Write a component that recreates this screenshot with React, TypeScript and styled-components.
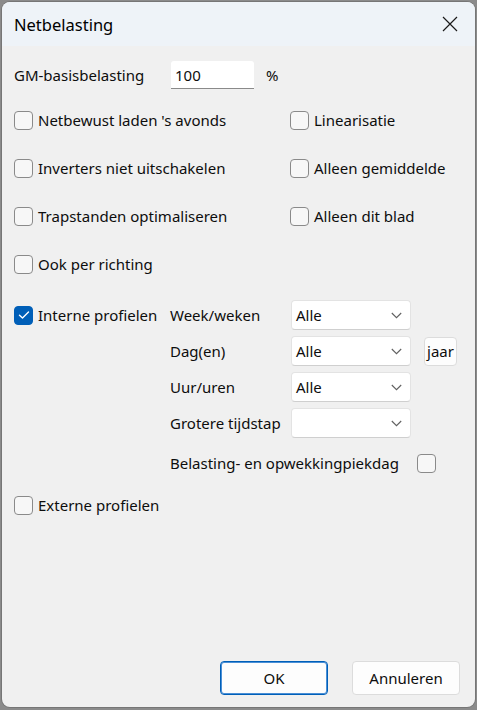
import React, { useState } from 'react'
import styled, { createGlobalStyle } from 'styled-components'

const GlobalStyle = createGlobalStyle`
  html, body { margin: 0; padding: 0; }
  body {
    background: #8b8b8b;
    font-family: "Segoe UI", "Noto Sans", "Open Sans", sans-serif;
    font-size: 15px;
    color: #0d0d0d;
  }
  * { box-sizing: border-box; }
`

const Page = styled.div`
  width: 477px;
  height: 710px;
  padding: 2px 2px 3px 2px;
`

const Dialog = styled.div`
  height: 100%;
  display: flex;
  flex-direction: column;
  background: #f0f0f0;
  border-radius: 8px;
  overflow: hidden;
  box-shadow: 0 0 0 1px rgba(0, 0, 0, 0.15);
`

const TitleBar = styled.header`
  height: 44px;
  flex: none;
  display: flex;
  align-items: center;
  justify-content: space-between;
  padding: 0 16px 0 12px;
  background: #eef3f8;
  font-size: 16.5px;
  color: #000;
`

const CloseButton = styled.button`
  border: 0;
  background: none;
  padding: 0;
  width: 18px;
  height: 18px;
  display: flex;
  align-items: center;
  justify-content: center;
`

const Body = styled.div`
  flex: 1;
  display: flex;
  flex-direction: column;
  padding: 15px 15px 12px 10px;
`

const FieldRow = styled.div`
  display: flex;
  align-items: center;
  height: 28px;
  padding-left: 2px;
`

const FieldLabel = styled.span`
  width: 157px;
`

const TextInput = styled.input`
  width: 83px;
  height: 28px;
  border: 0;
  border-bottom: 1px solid #8a8a8a;
  border-radius: 3px 3px 0 0;
  background: #fff;
  font: inherit;
  padding: 0 4px;
  color: #0d0d0d;
  outline: none;
`

const Unit = styled.span`
  margin-left: 12px;
`

const OptionGrid = styled.div`
  display: grid;
  grid-template-columns: 276px 1fr;
  grid-auto-rows: 48px;
  margin-top: 7px;
  padding-left: 2px;
`

const CheckLabel = styled.label`
  display: flex;
  align-items: center;
  gap: 5px;
  cursor: default;
  white-space: nowrap;
`

const Box = styled.span<{ $checked?: boolean }>`
  width: 19px;
  height: 19px;
  flex: none;
  border-radius: 4px;
  border: 1px solid ${p => (p.$checked ? '#005fb8' : '#8a8a8a')};
  background: ${p => (p.$checked ? '#005fb8' : '#f7f7f7')};
  display: flex;
  align-items: center;
  justify-content: center;
`

const ProfileSection = styled.div`
  display: grid;
  grid-template-columns: 156px 121px 120px 47px;
  row-gap: 6px;
  grid-auto-rows: 30px;
  margin-top: 12px;
  padding-left: 2px;
  align-items: center;
`

const ProfileLabel = styled.span`
  white-space: nowrap;
`

const Combo = styled.div`
  height: 30px;
  display: flex;
  align-items: center;
  justify-content: space-between;
  padding: 0 8px 0 4px;
  background: #fff;
  border: 1px solid #e3e3e3;
  border-bottom-color: #cfcfcf;
  border-radius: 4px;
`

const SmallButton = styled.button`
  margin-left: 13px;
  height: 29px;
  width: 33px;
  padding: 0;
  border: 1px solid #dcdcdc;
  border-radius: 4px;
  background: #fdfdfd;
  font: inherit;
  color: #0d0d0d;
`

const PeakRow = styled.div`
  display: flex;
  align-items: center;
  height: 26px;
  margin-top: 12px;
  padding-left: 158px;
`

const PeakLabel = styled.span`
  width: 247px;
  white-space: nowrap;
`

const ExternalRow = styled.div`
  margin-top: 17px;
  padding-left: 2px;
  height: 24px;
  display: flex;
  align-items: center;
`

const Footer = styled.div`
  margin-top: auto;
  display: flex;
  justify-content: flex-end;
  gap: 24px;
`

const DialogButton = styled.button<{ $primary?: boolean }>`
  width: 108px;
  height: 34px;
  border-radius: 4px;
  font: inherit;
  color: #0d0d0d;
  background: #fdfdfd;
  border: 1px solid ${p => (p.$primary ? '#005fb8' : '#dcdcdc')};
  box-shadow: ${p => (p.$primary ? 'inset 0 0 0 1px #4a8fd6' : 'none')};
`

const Check = ({ checked, onToggle, children }: { checked: boolean; onToggle: () => void; children?: React.ReactNode }) => (
  <CheckLabel onClick={onToggle}>
    <Box $checked={checked}>
      {checked && (
        <svg width="12" height="10" viewBox="0 0 12 10">
          <path d="M1.5 5.2 L4.5 8 L10.5 2" fill="none" stroke="#fff" strokeWidth="1.4" strokeLinecap="round" strokeLinejoin="round" />
        </svg>
      )}
    </Box>
    {children}
  </CheckLabel>
)

const Chevron = () => (
  <svg width="11" height="7" viewBox="0 0 11 7">
    <path d="M0.8 1 L5.5 5.7 L10.2 1" fill="none" stroke="#606060" strokeWidth="1.1" />
  </svg>
)

const Select = ({ value }: { value: string }) => (
  <Combo>
    <span>{value}</span>
    <Chevron />
  </Combo>
)

const App: React.FC = () => {
  const [flags, setFlags] = useState<Record<string, boolean>>({ interne: true })
  const toggle = (key: string) => () => setFlags({ ...flags, [key]: !flags[key] })

  const options: [string, string][] = [
    ['netbewust', "Netbewust laden 's avonds"],
    ['linear', 'Linearisatie'],
    ['inverters', 'Inverters niet uitschakelen'],
    ['gemiddelde', 'Alleen gemiddelde'],
    ['trap', 'Trapstanden optimaliseren'],
    ['blad', 'Alleen dit blad'],
    ['richting', 'Ook per richting'],
  ]

  return (
    <Page>
      <GlobalStyle />
      <Dialog>
        <TitleBar>
          <span>Netbelasting</span>
          <CloseButton>
            <svg width="16" height="16" viewBox="0 0 16 16">
              <path d="M1 1 L15 15 M15 1 L1 15" stroke="#1a1a1a" strokeWidth="1.2" />
            </svg>
          </CloseButton>
        </TitleBar>
        <Body>
          <FieldRow>
            <FieldLabel>GM-basisbelasting</FieldLabel>
            <TextInput defaultValue="100" />
            <Unit>%</Unit>
          </FieldRow>

          <OptionGrid>
            {options.map(([key, label]) => (
              <Check key={key} checked={!!flags[key]} onToggle={toggle(key)}>{label}</Check>
            ))}
          </OptionGrid>

          <ProfileSection>
            <Check checked={!!flags.interne} onToggle={toggle('interne')}>Interne profielen</Check>
            <ProfileLabel>Week/weken</ProfileLabel>
            <Select value="Alle" />
            <span />
            <span />
            <ProfileLabel>Dag(en)</ProfileLabel>
            <Select value="Alle" />
            <SmallButton>jaar</SmallButton>
            <span />
            <ProfileLabel>Uur/uren</ProfileLabel>
            <Select value="Alle" />
            <span />
            <span />
            <ProfileLabel>Grotere tijdstap</ProfileLabel>
            <Select value="" />
            <span />
          </ProfileSection>

          <PeakRow>
            <PeakLabel>Belasting- en opwekkingpiekdag</PeakLabel>
            <Check checked={!!flags.piek} onToggle={toggle('piek')} />
          </PeakRow>

          <ExternalRow>
            <Check checked={!!flags.extern} onToggle={toggle('extern')}>Externe profielen</Check>
          </ExternalRow>

          <Footer>
            <DialogButton $primary>OK</DialogButton>
            <DialogButton>Annuleren</DialogButton>
          </Footer>
        </Body>
      </Dialog>
    </Page>
  )
}

export default App
